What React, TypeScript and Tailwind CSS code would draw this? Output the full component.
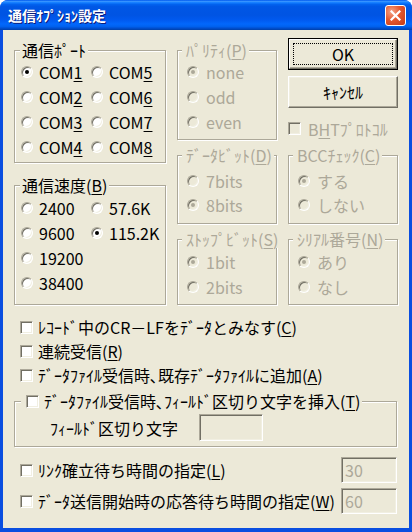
import React from 'react';

type Kids = { children?: React.ReactNode };

const U = ({ children }: Kids) => <u className="underline underline-offset-2">{children}</u>;

function Radio({ checked = false, disabled = false }: { checked?: boolean; disabled?: boolean }) {
  return (
    <span
      className={`flex items-center justify-center w-[12px] h-[12px] shrink-0 rounded-full border border-t-[#aca899] border-l-[#aca899] border-r-white border-b-white shadow-[inset_1px_1px_0_#716f64,inset_-1px_-1px_0_#f1efe2] ${
        disabled ? 'bg-[#ece9d8]' : 'bg-white'
      }`}
    >
      {checked && <span className={`w-[4px] h-[4px] rounded-full ${disabled ? 'bg-[#aca899]' : 'bg-black'}`} />}
    </span>
  );
}

function Check({ disabled = false }: { disabled?: boolean }) {
  return (
    <span
      className={`block w-[13px] h-[13px] shrink-0 border border-t-[#aca899] border-l-[#aca899] border-r-white border-b-white shadow-[inset_1px_1px_0_#716f64,inset_-1px_-1px_0_#f1efe2] ${
        disabled ? 'bg-[#ece9d8]' : 'bg-white'
      }`}
    />
  );
}

function Opt({
  label,
  checked,
  disabled,
  gap = 'ml-[6px]',
  row = 'h-[25px]',
}: {
  label: React.ReactNode;
  checked?: boolean;
  disabled?: boolean;
  gap?: string;
  row?: string;
}) {
  return (
    <div className={`flex items-center ${row}`}>
      <Radio checked={checked} disabled={disabled} />
      <span className={`${gap} whitespace-nowrap ${disabled ? 'text-[#aca899]' : 'text-black'}`}>{label}</span>
    </div>
  );
}

function Group({
  title,
  titleClass,
  className,
  disabled,
  children,
}: Kids & { title: React.ReactNode; titleClass: string; className: string; disabled?: boolean }) {
  return (
    <div className={`relative border border-[#aca899] shadow-[inset_1px_1px_0_#fff,1px_1px_0_#fff] ${className}`}>
      <span
        className={`absolute top-[-10px] h-[18px] leading-[18px] bg-[#ece9d8] whitespace-nowrap ${titleClass} ${
          disabled ? 'text-[#aca899]' : 'text-black'
        }`}
      >
        {title}
      </span>
      {children}
    </div>
  );
}

function CheckRow({ label, className = '' }: { label: React.ReactNode; className?: string }) {
  return (
    <div className={`flex items-center ${className}`}>
      <Check />
      <span className="ml-[5px] whitespace-nowrap">{label}</span>
    </div>
  );
}

function Edit({ value, className }: { value?: string; className: string }) {
  return (
    <div
      className={`flex items-center pl-[3px] bg-[#ece9d8] text-[#aca899] border border-t-[#aca899] border-l-[#aca899] border-r-white border-b-white shadow-[inset_1px_1px_0_#716f64,inset_-1px_-1px_0_#f1efe2] ${className}`}
    >
      {value}
    </div>
  );
}

export default function App() {
  return (
    <div className="w-[412px] h-[532px] bg-white font-['Noto_Sans_CJK_JP','Noto_Sans',sans-serif] text-[16px] leading-[18px] text-black">
      <div className="flex flex-col h-[532px] rounded-t-[8px] bg-[#0a4ee0] overflow-hidden">
        {/* title bar */}
        <div className="flex items-center h-[30px] shrink-0 pl-[8px] pr-[6px] bg-[linear-gradient(to_bottom,#0058ee_0%,#3593ff_5%,#127dff_9%,#0262ee_15%,#0057e5_22%,#0054e3_50%,#0059ef_66%,#0268fc_80%,#0062ef_88%,#0052d6_93%,#003fa8_100%)]">
          <span className="text-white font-bold text-[14px] [text-shadow:1px_1px_0_#0a1a7a]">通信ｵﾌﾟｼｮﾝ設定</span>
          <div className="ml-auto flex items-center justify-center w-[21px] h-[21px] rounded-[3px] border border-white bg-[radial-gradient(circle_at_30%_30%,#f3a58a_0%,#e5582f_45%,#c63a16_100%)]">
            <svg width="11" height="11" viewBox="0 0 11 11">
              <path d="M1.5 1.5 L9.5 9.5 M9.5 1.5 L1.5 9.5" stroke="#fff" strokeWidth="2.2" strokeLinecap="square" />
            </svg>
          </div>
        </div>

        {/* client */}
        <div className="flex-1 mx-[3px] mb-[4px] bg-[#ece9d8] pl-[11px]">
          <div className="flex mt-[8px]">
            {/* left column */}
            <div className="flex flex-col w-[152px] shrink-0">
              <Group title="通信ﾎﾟｰﾄ" titleClass="left-[5px] px-[2px]" className="mt-[12px] h-[113px] pt-[8px] pl-[6px]">
                <div className="grid grid-cols-[70px_auto]">
                  <Opt label={<>COM<U>1</U></>} checked />
                  <Opt label={<>COM<U>5</U></>} />
                  <Opt label={<>COM<U>2</U></>} />
                  <Opt label={<>COM<U>6</U></>} />
                  <Opt label={<>COM<U>3</U></>} />
                  <Opt label={<>COM<U>7</U></>} />
                  <Opt label={<>COM<U>4</U></>} />
                  <Opt label={<>COM<U>8</U></>} />
                </div>
              </Group>
              <Group
                title={<>通信速度(<U>B</U>)</>}
                titleClass="left-[5px] px-[2px]"
                className="mt-[22px] h-[120px] pt-[9px] pl-[6px]"
              >
                <div className="grid grid-cols-[70px_auto]">
                  <Opt label="2400" />
                  <Opt label="57.6K" />
                  <Opt label="9600" />
                  <Opt label="115.2K" checked />
                  <Opt label="19200" />
                  <div />
                  <Opt label="38400" />
                </div>
              </Group>
            </div>

            {/* right block */}
            <div className="ml-[11px] grid grid-cols-[100px_110px] grid-rows-[102px_69px_66px] gap-x-[11px] gap-y-[15px]">
              <Group
                disabled
                title={<>ﾊﾟﾘﾃｨ(<U>P</U>)</>}
                titleClass="left-[4px] pl-[4px] pr-[2px]"
                className="mt-[12px] h-[90px] pt-[8px] pl-[9px]"
              >
                <Opt disabled checked label="none" gap="ml-[7px]" />
                <Opt disabled label="odd" gap="ml-[7px]" />
                <Opt disabled label="even" gap="ml-[7px]" />
              </Group>

              <div className="flex flex-col">
                <div className="relative h-[32px] w-[110px] border border-black">
                  <div className="flex h-full items-center justify-center border border-t-white border-l-white border-r-[#716f64] border-b-[#716f64] shadow-[inset_-1px_-1px_0_#aca899]">
                    OK
                  </div>
                  <div className="absolute inset-[4px] border border-dotted border-black" />
                </div>
                <div className="mt-[6px] flex h-[32px] w-[110px] items-center justify-center border border-t-white border-l-white border-r-[#716f64] border-b-[#716f64] shadow-[inset_-1px_-1px_0_#aca899,inset_1px_1px_0_#f1efe2]">
                  ｷｬﾝｾﾙ
                </div>
                <div className="mt-[13px] flex h-[15px] items-center">
                  <Check disabled />
                  <span className="ml-[7px] text-[#aca899] whitespace-nowrap">
                    B<U>H</U>Tﾌﾟﾛﾄｺﾙ
                  </span>
                </div>
              </div>

              <Group
                disabled
                title={<>ﾃﾞｰﾀﾋﾞｯﾄ(<U>D</U>)</>}
                titleClass="left-[4px] pl-[4px] pr-[2px]"
                className="h-[69px] pt-[13px] pl-[9px]"
              >
                <Opt disabled label="7bits" gap="ml-[7px]" row="h-[24px]" />
                <Opt disabled checked label="8bits" gap="ml-[7px]" row="h-[24px]" />
              </Group>
              <Group
                disabled
                title={<>BCCﾁｪｯｸ(<U>C</U>)</>}
                titleClass="left-[4px] pl-[4px] pr-[2px]"
                className="h-[69px] pt-[13px] pl-[9px]"
              >
                <Opt disabled checked label="する" gap="ml-[7px]" row="h-[24px]" />
                <Opt disabled label="しない" gap="ml-[7px]" row="h-[24px]" />
              </Group>

              <Group
                disabled
                title={<>ｽﾄｯﾌﾟﾋﾞｯﾄ(<U>S</U>)</>}
                titleClass="left-[4px] pl-[4px] pr-[1px]"
                className="h-[66px] pt-[9px] pl-[9px]"
              >
                <Opt disabled checked label="1bit" gap="ml-[7px]" />
                <Opt disabled label="2bits" gap="ml-[7px]" />
              </Group>
              <Group
                disabled
                title={<>ｼﾘｱﾙ番号(<U>N</U>)</>}
                titleClass="left-[4px] pl-[4px] pr-[2px]"
                className="h-[66px] pt-[9px] pl-[9px]"
              >
                <Opt disabled checked label="あり" gap="ml-[7px]" />
                <Opt disabled label="なし" gap="ml-[7px]" />
              </Group>
            </div>
          </div>

          {/* options */}
          <div className="mt-[10px] w-[383px] pl-[6px]">
            <CheckRow className="h-[24px]" label={<>ﾚｺｰﾄﾞ中のCR－LFをﾃﾞｰﾀとみなす(<U>C</U>)</>} />
            <CheckRow className="h-[24px]" label={<>連続受信(<U>R</U>)</>} />
            <CheckRow className="h-[24px]" label={<>ﾃﾞｰﾀﾌｧｲﾙ受信時､既存ﾃﾞｰﾀﾌｧｲﾙに追加(<U>A</U>)</>} />
          </div>

          <Group
            title={
              <span className="flex items-center h-[18px]">
                <Check />
                <span className="ml-[5px]">
                  ﾃﾞｰﾀﾌｧｲﾙ受信時､ﾌｨｰﾙﾄﾞ区切り文字を挿入(<U>T</U>)
                </span>
              </span>
            }
            titleClass="left-[6px] pl-[5px] pr-[2px]"
            className="mt-[14px] h-[46px] w-[383px] pt-[12px] pl-[35px]"
          >
            <div className="flex items-center">
              <span className="w-[149px] whitespace-nowrap">ﾌｨｰﾙﾄﾞ区切り文字</span>
              <Edit className="w-[64px] h-[27px]" />
            </div>
          </Group>

          <div className="w-[383px] pl-[6px]">
            <div className="mt-[10px] flex items-center h-[26px]">
              <Check />
              <span className="ml-[5px] whitespace-nowrap">
                ﾘﾝｸ確立待ち時間の指定(<U>L</U>)
              </span>
              <Edit value="30" className="ml-auto w-[56px] h-[26px]" />
            </div>
            <div className="mt-[5px] flex items-center h-[26px]">
              <Check />
              <span className="ml-[5px] whitespace-nowrap">
                ﾃﾞｰﾀ送信開始時の応答待ち時間の指定(<U>W</U>)
              </span>
              <Edit value="60" className="ml-auto w-[56px] h-[26px]" />
            </div>
          </div>
        </div>
      </div>
    </div>
  );
}
